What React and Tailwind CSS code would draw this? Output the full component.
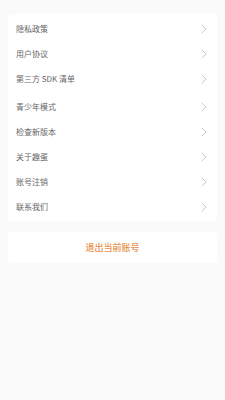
import { ChevronRight } from 'lucide-react'

const rows = ['隐私政策', '用户协议', '第三方 SDK 清单', '青少年模式', '检查新版本', '关于趣蛋', '账号注销', '联系我们']

export default function App() {
    return (
        <div
            className="min-h-[400px] w-[225px] bg-[#fafafa] pt-[14px]"
            style={{ fontFamily: '"Noto Sans CJK SC", "Noto Sans", sans-serif' }}
        >
            <div className="mx-[8px] rounded-[4px] bg-white pt-[2px] pb-[3px]">
                {rows.map((label, i) => (
                    <div
                        key={label}
                        className={`flex h-[25px] items-center justify-between pl-[8px] pr-[5px] ${i === 3 ? 'mt-[3px]' : ''}`}
                    >
                        <span className="text-[8px] text-[#666666]">{label}</span>
                        <ChevronRight className="h-[16px] w-[16px] text-[#bbbbbb]" strokeWidth={1.2} />
                    </div>
                ))}
            </div>

            <div className="mx-[8px] mt-[10px] flex h-[31px] items-center justify-center rounded-[4px] bg-white">
                <span className="text-[9px] font-medium text-[#e8914a]">退出当前账号</span>
            </div>
        </div>
    )
}
